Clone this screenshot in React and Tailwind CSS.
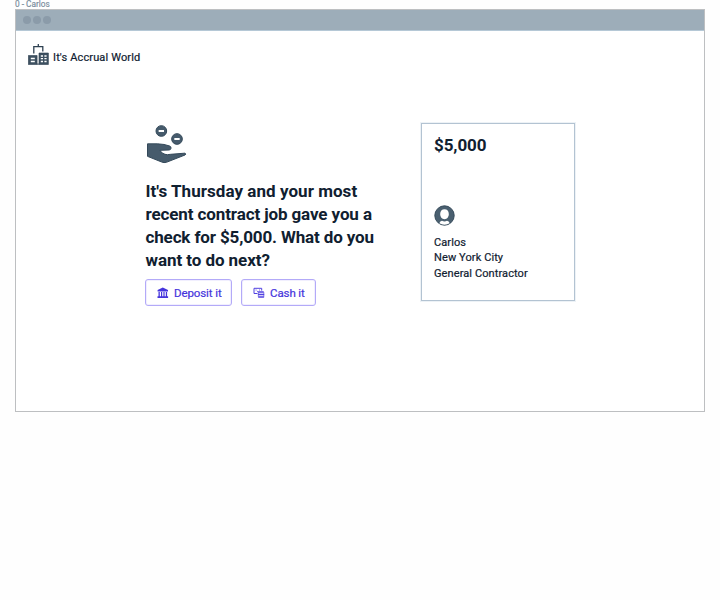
function BuildingsIcon() {
  return (
    <svg className="block h-[22px] w-[22px] shrink-0" viewBox="0 0 22 22" fill="none">
      <path d="M5.800 9.500V2.700H14.800V7.500M10.300 0V2.700" stroke="#2f4252" strokeWidth="1.3" />
      <path d="M0.300 11.500h8.800v9H0.300zM11 9h9.400v11.500H11z" fill="#3d5060" stroke="#2f4252" strokeWidth=".6" />
      <path d="M9 20.100h2" stroke="#2f4252" strokeWidth="1" />
      <path d="M2.800 14.500h4M2.800 17.500h4M12.800 12h2.200M16.400 12h2.200M12.800 14.700h2.200M16.400 14.700h2.200M12.800 17.500h2.200M16.400 17.500h2.200" stroke="#fff" strokeWidth="1.300" />
    </svg>
  );
}

function HandIcon() {
  return (
    <svg className="block h-[42px] w-[42px]" viewBox="45 39 126 126">
      <g fill="#465b6c" stroke="#34495a" strokeWidth="3" strokeLinejoin="round">
        <circle cx="94" cy="63" r="16" />
        <circle cx="141" cy="87" r="16" />
        <path d="M52.500 101.500H83Q103 102 119 108Q124 110 123 115Q122 120 117 120L90 121Q94 130 105 133Q112 135 121 133L165 129.500Q170 132 165 135L109 157Q102 159 95 156L52.500 139Z" />
      </g>
      <path d="M86 63h16M133 87h16" stroke="#fff" strokeWidth="6" />
    </svg>
  );
}

function BankIcon() {
  return (
    <svg className="block h-3 w-3" viewBox="0 0 12 12" fill="#4534dc">
      <path d="M5.800 .5 11 3v1.500H.6V3zM1.500 5h1.300v4.200H1.500zM4 5h1.200v4.200H4zM6.400 5h1.200v4.200H6.400zM8.800 5h1.300v4.200H8.800zM.5 9.300h10.600V11H.5z" />
    </svg>
  );
}

function CashIcon() {
  return (
    <svg className="block h-3 w-3" viewBox="0 0 12 12" fill="none" stroke="#5040e0">
      <path d="M4.500 6.500H1V1.300H8.700V3.600M2.600 3h.9M6.200 3h.9M4.200 4.400h1" />
      <path d="M5.700 5h4.500M5.700 7.400h4.800M5.700 9.900h4.800" strokeWidth="1.500" strokeLinecap="round" />
      <path d="M5.300 5.200v4.400M10.800 5.200v4.400" strokeWidth=".7" />
    </svg>
  );
}

function AvatarIcon() {
  return (
    <svg className="block h-[21px] w-[21px]" viewBox="0 0 21 21">
      <circle cx="10.500" cy="10.500" r="9.700" fill="#4a6070" stroke="#354a5a" strokeWidth="1" />
      <path d="M10.500 4.200c2.700 0 4.300 2 4.300 4.800s-1.600 5.200-4.300 5.200S6.200 11.800 6.200 9s1.600-4.800 4.300-4.800z" fill="#fff" />
      <path d="M5.300 18.300Q6 16 8 15.800Q10.500 17 13 15.800Q15 16 15.700 18.300Q10.500 21 5.300 18.300Z" fill="#fff" />
    </svg>
  );
}

function ActionButton({ icon, label, className }) {
  return (
    <button className={`flex h-[27px] items-center rounded-[3px] border border-solid border-[#b3aaf8] pl-[11px] text-[11.500px] leading-[16px] tracking-[-0.100px] text-[#4534dc] shadow-[inset_0_0_0_1px_#f1effe] [-webkit-text-stroke:0.200px] ${className}`}>
      {icon}
      <span className="ml-[5px] pt-px whitespace-nowrap">{label}</span>
    </button>
  );
}

export default function App() {
  return (
    <div className="h-[600px] w-[720px] overflow-hidden bg-[#fefefe] pl-[15px] font-[Roboto,sans-serif] text-[#102030]">
      <div className="h-[9px] whitespace-nowrap text-[8.300px] leading-[8px] text-[#788b9b] [-webkit-text-stroke:0.150px]">0 - Carlos</div>
      <div className="h-[403px] w-[690px] border border-[#bdbfc1] bg-white">
        <div className="flex h-[21px] items-center gap-[2px] border-b border-[#b5c8d6] bg-[#9dadb9] pl-[7px]">
          <i className="h-[8px] w-[8px] rounded-full bg-[#8b9ba9]" />
          <i className="h-[8px] w-[8px] rounded-full bg-[#8b9ba9]" />
          <i className="h-[8px] w-[8px] rounded-full bg-[#8b9ba9]" />
        </div>
        <header className="flex h-[49px] pl-3 pt-[13px]">
          <BuildingsIcon />
          <span className="ml-[3px] pt-[6px] whitespace-nowrap text-[11px] leading-[16px] tracking-[0.140px] [-webkit-text-stroke:0.200px]">It's Accrual World</span>
        </header>
        <main className="flex pl-[129px] pt-[43px]">
          <section className="w-[276px]">
            <HandIcon />
            <h1 className="mt-[15px] whitespace-nowrap pl-[0.500px] text-[17px] leading-[23px] font-bold">
              <span className="block tracking-[0.050px]">It's Thursday and your most</span>
              <span className="block tracking-[-0.110px]">recent contract job gave you a</span>
              <span className="block tracking-[-0.140px]">check for $5,000. What do you</span>
              <span className="block tracking-[-0.070px]">want to do next?</span>
            </h1>
            <div className="mt-[7px] flex gap-[9px]">
              <ActionButton icon={<BankIcon />} label="Deposit it" className="w-[87px]" />
              <ActionButton icon={<CashIcon />} label="Cash it" className="w-[75px]" />
            </div>
          </section>
          <aside className="h-[178px] w-[154px] border border-[#b3c3d2] pl-3 pt-[10px] shadow-[0_0_0_1px_#edf2f6]">
            <div className="text-[17px] leading-[22px] font-bold tracking-[-0.100px]">$5,000</div>
            <div className="mt-[49px]"><AvatarIcon /></div>
            <div className="mt-[9px] whitespace-nowrap text-[11px] leading-[15.300px] tracking-[0.100px] [-webkit-text-stroke:0.200px]">
              <p>Carlos</p>
              <p>New York City</p>
              <p>General Contractor</p>
            </div>
          </aside>
        </main>
      </div>
    </div>
  );
}
